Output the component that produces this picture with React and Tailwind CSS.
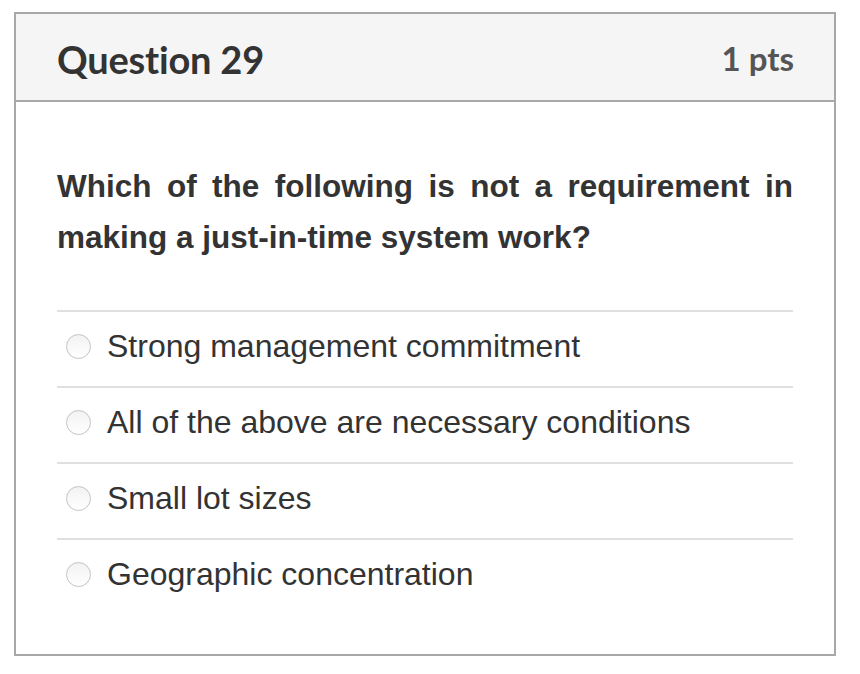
const options = [
  'Strong management commitment',
  'All of the above are necessary conditions',
  'Small lot sizes',
  'Geographic concentration',
];

export default function App() {
  return (
    <div className="min-h-screen bg-white pt-[12px] pl-[14px]">
      <div className="w-[822px] h-[644px] border-2 border-[#a8a8a8] bg-white">
        {/* Header */}
        <div className="h-[88px] bg-[#f5f5f5] border-b-2 border-[#a8a8a8] flex items-center justify-between pl-[41px] pr-[40px]">
          <h2 className="font-['Lato','Noto_Sans',sans-serif] font-bold text-[38px] text-[#333] leading-none pt-[3px] tracking-[-0.2px]">
            Question 29
          </h2>
          <span className="font-['Lato','Noto_Sans',sans-serif] font-bold text-[33px] text-[#555] leading-none pt-[3px]">
            1 pts
          </span>
        </div>

        {/* Body */}
        <div className="px-[41px] pt-[59px] font-['Liberation_Sans',Arial,sans-serif] text-[#333]">
          <p className="font-bold text-[31.5px] leading-[51px] text-justify">
            Which of the following is not a requirement in making a just-in-time system work?
          </p>

          <div className="mt-[47px]">
            {options.map((opt) => (
              <label
                key={opt}
                className="flex items-center h-[76px] pb-[6px] border-t-2 border-[#e0e0e0]"
              >
                <span className="ml-[9px] w-[25px] h-[25px] rounded-full border border-[#c4c4c4] bg-gradient-to-b from-[#f2f2f2] to-white shrink-0" />
                <span className="ml-[16px] text-[32px]">{opt}</span>
              </label>
            ))}
          </div>
        </div>
      </div>
    </div>
  );
}
